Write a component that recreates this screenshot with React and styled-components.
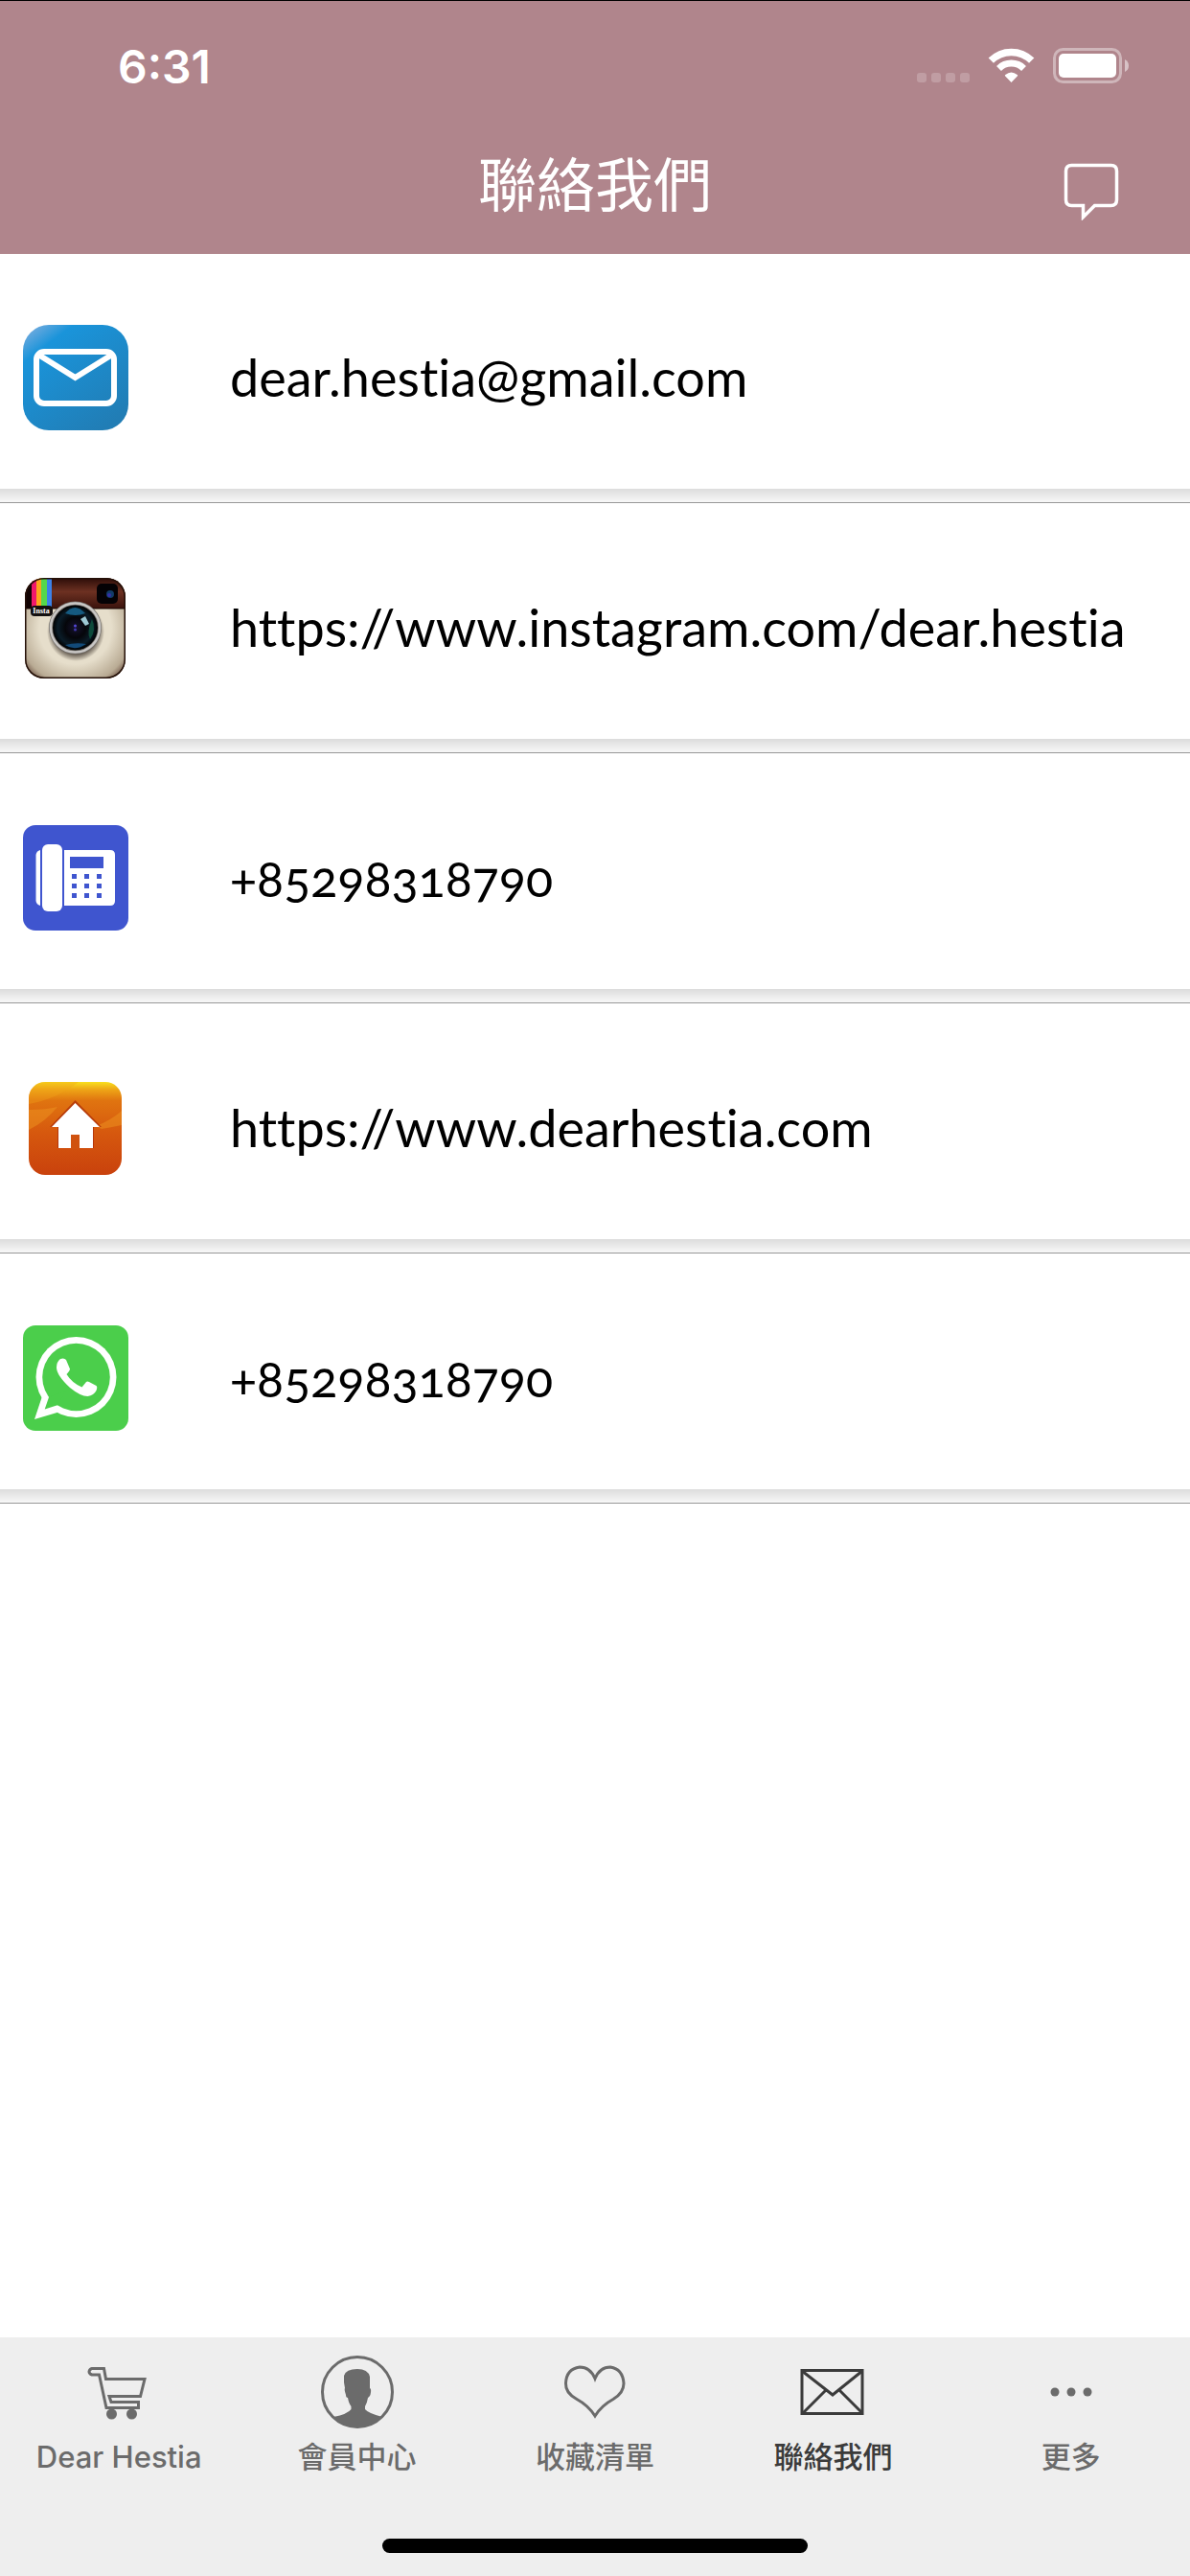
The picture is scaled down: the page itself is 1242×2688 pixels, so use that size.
import styled, { createGlobalStyle } from "styled-components";

const CONTACTS = [
  { icon: MailIcon, text: "dear.hestia@gmail.com", href: "mailto:dear.hestia@gmail.com" },
  { icon: InstaIcon, text: "https://www.instagram.com/dear.hestia", href: "https://www.instagram.com/dear.hestia" },
  { icon: PhoneIcon, text: "+85298318790", href: "tel:+85298318790", number: true },
  { icon: HomeIcon, text: "https://www.dearhestia.com", href: "https://www.dearhestia.com" },
  { icon: WhatsappIcon, text: "+85298318790", href: "https://wa.me/85298318790", number: true },
];

const TABS = [
  { icon: CartIcon, label: "Dear Hestia" },
  { icon: MemberIcon, label: "會員中心" },
  { icon: HeartIcon, label: "收藏清單" },
  { icon: EnvelopeIcon, label: "聯絡我們", active: true },
  { icon: MoreIcon, label: "更多" },
];

export default function App() {
  return (
    <Screen>
      <GlobalStyle />
      <Header>
        <StatusBar>
          <Time>6:31</Time>
          <StatusIcons />
        </StatusBar>
        <NavBar>
          <Title>聯絡我們</Title>
          <ChatButton type="button" aria-label="訊息">
            <ChatIcon />
          </ChatButton>
        </NavBar>
      </Header>
      <List>
        {CONTACTS.map(({ icon: Icon, text, href, number }) => (
          <Item key={href}>
            <ContactLink href={href}>
              <Icon />
              <ContactText $number={number}>{text}</ContactText>
            </ContactLink>
          </Item>
        ))}
      </List>
      <Footer>
        <Tabs>
          {TABS.map(({ icon: Icon, label, active }) => (
            <Tab key={label} type="button" $active={active}>
              <Icon />
              <span>{label}</span>
            </Tab>
          ))}
        </Tabs>
        <HomeIndicator />
      </Footer>
    </Screen>
  );
}

function StatusIcons() {
  return (
    <svg width="222" height="40" viewBox="0 0 222 40" fill="#fff" aria-hidden="true">
      <g opacity="0.2">
        <rect x="1" y="27" width="10" height="10" rx="3" />
        <rect x="16" y="27" width="10" height="10" rx="3" />
        <rect x="31" y="27" width="10" height="10" rx="3" />
        <rect x="46" y="27" width="10" height="10" rx="3" />
      </g>
      <g fill="none" stroke="#fff">
        <path d="M78.300 14.200A30 30 0 0 1 120.700 14.200" strokeWidth="7.500" />
        <path d="M86.500 22.400A18.500 18.500 0 0 1 112.500 22.400" strokeWidth="7" />
      </g>
      <path d="M99.500 37L93 30.300Q92.500 29.500 93.300 29Q99.500 24 105.700 29Q106.500 29.500 106 30.300Z" />
      <rect x="144.500" y="2.500" width="69" height="34" rx="9" fill="none" stroke="#fff" strokeWidth="3" opacity="0.400" />
      <rect x="149" y="7" width="60" height="25" rx="5" />
      <path d="M218 13Q222 15 222 19.500Q222 24 218 26Z" opacity="0.500" />
    </svg>
  );
}

function ChatIcon() {
  return (
    <svg width="58" height="60" viewBox="0 0 58 60" fill="none" stroke="#fff" strokeWidth="3.500" aria-hidden="true">
      <path d="M8.500 2.500H49.500Q55.500 2.500 55.500 8.500V38.500Q55.500 44.500 49.500 44.500H32.500L20.500 56.500V44.500H8.500Q2.500 44.500 2.500 38.500V8.500Q2.500 2.500 8.500 2.500Z" />
    </svg>
  );
}

function MailIcon() {
  return (
    <AppIcon viewBox="0 0 110 110" aria-hidden="true">
      <defs>
        <linearGradient id="mail" x1="0" y1="0" x2="0.750" y2="1">
          <stop offset="0" stopColor="#7fb0e0" />
          <stop offset="0.060" stopColor="#6faade" />
          <stop offset="0.230" stopColor="#1a94da" />
          <stop offset="1" stopColor="#217db5" />
        </linearGradient>
      </defs>
      <rect width="110" height="110" rx="27" fill="url(#mail)" />
      <g fill="none" stroke="#fff" strokeWidth="6">
        <rect x="14" y="28" width="81" height="54" rx="8" />
        <path d="M16 31L54.500 55L93 31" />
      </g>
    </AppIcon>
  );
}

function InstaIcon() {
  return (
    <AppIcon viewBox="0 0 110 110" aria-hidden="true">
      <defs>
        <radialGradient id="body" cx="0.500" cy="0.500" r="0.720">
          <stop offset="0.500" stopColor="#e6decb" />
          <stop offset="0.780" stopColor="#b9ab94" />
          <stop offset="0.950" stopColor="#4a2a20" />
        </radialGradient>
        <linearGradient id="leather" x1="0" y1="0" x2="0" y2="1">
          <stop offset="0" stopColor="#2c0c08" />
          <stop offset="0.450" stopColor="#6d3122" />
          <stop offset="1" stopColor="#3a120c" />
        </linearGradient>
        <radialGradient id="lens" cx="0.500" cy="0.500" r="0.500">
          <stop offset="0" stopColor="#15122e" />
          <stop offset="0.450" stopColor="#05060a" />
          <stop offset="0.780" stopColor="#0a1c28" />
          <stop offset="1" stopColor="#000" />
        </radialGradient>
        <radialGradient id="shade">
          <stop offset="0.700" stopColor="#1c120c" stopOpacity="0.800" />
          <stop offset="1" stopColor="#1c120c" stopOpacity="0" />
        </radialGradient>
        <clipPath id="case">
          <rect x="2" y="3" width="105" height="105" rx="20" />
        </clipPath>
      </defs>
      <g clipPath="url(#case)">
        <rect x="2" y="3" width="105" height="105" fill="url(#body)" />
        <rect x="2" y="3" width="105" height="32" fill="url(#leather)" />
        <rect x="2" y="3" width="7" height="32" fill="#120303" />
        <rect x="9" y="3" width="5" height="30" fill="#f0186c" />
        <rect x="14" y="3" width="5" height="30" fill="#fba51c" />
        <rect x="19" y="3" width="6" height="30" fill="#55d84c" />
        <rect x="25" y="3" width="5" height="30" fill="#3c82e8" />
        <rect x="77" y="9" width="22" height="21" rx="5" fill="#050205" />
        <circle cx="91" cy="20" r="4" fill="#123c68" />
        <circle cx="90" cy="21" r="2" fill="#3530a8" />
        <path d="M2 35H107" stroke="#1b0805" strokeWidth="1" />
        <rect x="2" y="3" width="105" height="105" rx="20" fill="none" stroke="#241008" strokeWidth="3" />
      </g>
      <rect x="8" y="32" width="23" height="11" rx="4" fill="#141010" />
      <text x="19" y="40" fill="#fff" fontSize="8" fontWeight="700" textAnchor="middle" fontFamily="Liberation Serif, serif">Insta</text>
      <ellipse cx="55" cy="59" rx="30" ry="31" fill="url(#shade)" />
      <circle cx="54.500" cy="55" r="27.500" fill="#77736f" />
      <circle cx="54.500" cy="55" r="25.500" fill="none" stroke="#c9c7c5" strokeWidth="2.500" />
      <circle cx="54.500" cy="55" r="23.500" fill="url(#lens)" />
      <path d="M44 40Q54 28 65 40Q55 44 44 40Z" fill="#155a80" />
      <path d="M44 73Q54 80 66 72Q55 70 44 73Z" fill="#124a78" />
      <path d="M72 46Q77 57 70 67Q66 60 72 46Z" fill="#0d4a3b" />
      <path d="M60 46L65 43L69 51L65 53Z" fill="#9dc8d4" />
      <circle cx="54.500" cy="53" r="1.500" fill="#5548d8" />
      <circle cx="54.500" cy="57" r="1.500" fill="#4238b0" />
    </AppIcon>
  );
}

function PhoneIcon() {
  return (
    <AppIcon viewBox="0 0 110 110" aria-hidden="true">
      <rect width="110" height="110" rx="13" fill="#3f55cf" />
      <g fill="#fff">
        <path d="M18 26V84Q14 83 13.500 79V31Q14 27 18 26Z" />
        <rect x="20" y="20" width="21" height="70" rx="6" />
        <path d="M43 26H91Q96 26 96 31V79Q96 84 91 84H43Z" />
      </g>
      <g fill="#3f55cf">
        <rect x="49" y="33" width="35" height="12" />
        {[51, 64, 77].map((x) =>
          [51, 61, 71].map((y) => <rect key={x + "-" + y} x={x} y={y} width="5" height="5" />)
        )}
      </g>
    </AppIcon>
  );
}

function HomeIcon() {
  return (
    <AppIcon viewBox="0 0 110 110" aria-hidden="true">
      <defs>
        <linearGradient id="home" x1="0" y1="0" x2="0" y2="1">
          <stop offset="0" stopColor="#f8e01e" />
          <stop offset="0.080" stopColor="#eea616" />
          <stop offset="0.200" stopColor="#e07410" />
          <stop offset="0.550" stopColor="#d6580e" />
          <stop offset="1" stopColor="#c9420d" />
        </linearGradient>
        <clipPath id="tile">
          <rect x="6" y="7" width="97" height="97" rx="17" />
        </clipPath>
      </defs>
      <g clipPath="url(#tile)">
        <rect x="6" y="7" width="97" height="97" fill="url(#home)" />
        <path d="M6 30Q35 25 58 7H6Z" fill="#f0a21a" opacity="0.350" />
        <path d="M6 36Q24 36 36 33Q24 48 6 57Z" fill="#ee9420" opacity="0.500" />
        <path d="M103 37Q92 47 76 53L82 56Q94 54 103 52Z" fill="#ee9420" opacity="0.500" />
      </g>
      <path d="M54.500 26L28 54H36V76H74V54H82Z" fill="#a82a08" opacity="0.700" />
      <path d="M54.500 29L30 54H37V76H50V62H59V76H73V54H80Z" fill="#fff" />
      <rect x="50" y="62" width="9" height="15" fill="#d0520f" />
    </AppIcon>
  );
}

function WhatsappIcon() {
  return (
    <AppIcon viewBox="0 0 110 110" aria-hidden="true">
      <rect width="110" height="110" rx="13" fill="#4bce4b" />
      <g fill="#fff">
        <circle cx="55.500" cy="54" r="42" />
        <path d="M20 74L12 98L35.500 91L50 70Z" />
      </g>
      <g fill="#4bce4b">
        <circle cx="55.500" cy="54" r="35.300" />
        <path d="M27 75L22.700 87.500L36 83.300L45 68Z" />
      </g>
      <path
        d="M39 35Q43 33.500 45 36L49 45.500Q49 47 45.500 51Q51 60 61.500 64.500L66 59Q67 58 69 59L76.500 63Q78 64 76.500 68Q74 73 67.500 74Q60 74 49 65Q35 52 35 44Q35 38 39 35Z"
        fill="#fff"
      />
    </AppIcon>
  );
}

function CartIcon() {
  return (
    <TabIcon viewBox="0 0 90 90" aria-hidden="true">
      <path
        d="M17 21.500H29.500L31.500 32.500H72L67.500 50.500H35L37 56.500H65.500V62.500H32L24.500 28H17Q14 27 14 24.700Q14.500 22 17 21.500Z"
        fill="none"
        stroke="currentColor"
        strokeWidth="3"
      />
      <circle cx="37.500" cy="69" r="5.500" fill="currentColor" />
      <circle cx="58.500" cy="69" r="5.500" fill="currentColor" />
    </TabIcon>
  );
}

function MemberIcon() {
  return (
    <TabIcon viewBox="0 0 90 90" aria-hidden="true">
      <circle cx="45" cy="46" r="36.500" fill="none" stroke="currentColor" strokeWidth="3" />
      <path
        d="M45 22Q56 22 58 30V42Q60 43 58.500 49Q57 52 56 52Q55 58 53 61V64Q56 68 71 72Q60 83 45 83Q30 83 20 72Q35 69 38.500 64V61Q36 58 35 52Q33 52 33 49Q31 43 32 42L31 36V29Q33 22 45 22Z"
        fill="currentColor"
      />
    </TabIcon>
  );
}

function HeartIcon() {
  return (
    <TabIcon viewBox="0 0 90 90" aria-hidden="true">
      <path
        d="M45 32Q40 20 29 20Q15 22 14.500 37Q14 47 26 53.500Q38 60 45 71Q52 60 64 53.500Q75 47 75 37Q74 22 61 20Q50 20 45 32Z"
        fill="none"
        stroke="currentColor"
        strokeWidth="3"
      />
    </TabIcon>
  );
}

function EnvelopeIcon() {
  return (
    <TabIcon viewBox="0 0 90 90" fill="none" stroke="currentColor" strokeWidth="3" aria-hidden="true">
      <rect x="13" y="23.500" width="63" height="45" />
      <path d="M13 24L45 49L76 24M14 68L38 44M76 68L52 44" />
    </TabIcon>
  );
}

function MoreIcon() {
  return (
    <TabIcon viewBox="0 0 90 90" fill="currentColor" aria-hidden="true">
      <circle cx="28" cy="46" r="4.500" />
      <circle cx="45" cy="46" r="4.500" />
      <circle cx="62" cy="46" r="4.500" />
    </TabIcon>
  );
}

const GlobalStyle = createGlobalStyle`
  * {
    box-sizing: border-box;
  }
  body {
    margin: 0;
    background: #fff;
    font-family: Inter, "Noto Sans CJK TC", sans-serif;
  }
`;

const Screen = styled.div`
  display: flex;
  flex-direction: column;
  min-height: 100vh;
`;

const Header = styled.header`
  background: #b0858c;
  border-top: 1px solid #000;
  box-shadow: 0 1px 0 #b0858c;
  color: #fff;
`;

const StatusBar = styled.div`
  display: flex;
  justify-content: space-between;
  align-items: center;
  height: 131px;
  padding: 5px 64px 0 123px;
`;

const Time = styled.span`
  font-size: 48px;
  font-weight: 600;
`;

const NavBar = styled.div`
  display: grid;
  grid-template-columns: 1fr auto 1fr;
  align-items: center;
  height: 132px;
  padding: 0 74px 8px;
`;

const Title = styled.h1`
  grid-column: 2;
  margin: 0;
  font-size: 61px;
  font-weight: 400;
  line-height: 124px;
`;

const ChatButton = styled.button`
  justify-self: end;
  display: flex;
  padding: 12px 0 0;
  border: none;
  background: none;
`;

const List = styled.ul`
  flex: 1;
  margin: 0;
  padding: 0;
  list-style: none;
`;

const Item = styled.li`
  border-bottom: 1px solid #979797;
  background: linear-gradient(#dcdcdc, #f8f8f8) bottom / 100% 14px no-repeat;
`;

const ContactLink = styled.a`
  display: flex;
  align-items: center;
  gap: 106px;
  height: 260px;
  padding: 0 24px;
  color: #000;
  text-decoration: none;
`;

const AppIcon = styled.svg`
  flex: none;
  width: 110px;
  height: 110px;
`;

const ContactText = styled.span`
  font-family: Lato, sans-serif;
  font-size: ${(props) => (props.$number ? "52px" : "54px")};
  font-variant-ligatures: none;
  font-variant-numeric: oldstyle-nums;
  line-height: 64px;
  white-space: nowrap;
`;

const Footer = styled.footer`
  display: flex;
  flex-direction: column;
  align-items: center;
  gap: 62px;
  padding: 11px 0 24px;
  background: #eee;
`;

const Tabs = styled.nav`
  display: flex;
  width: 100%;
`;

const Tab = styled.button`
  flex: 1 1 0;
  display: flex;
  flex-direction: column;
  align-items: center;
  padding: 0;
  border: none;
  background: none;
  color: ${(props) => (props.$active ? "#3b3b3b" : "#6b6b6b")};
  font-family: inherit;
  font-size: 31px;
  font-weight: 500;
  line-height: 47px;
`;

const TabIcon = styled.svg`
  width: 90px;
  height: 90px;
`;

const HomeIndicator = styled.div`
  width: 444px;
  height: 15px;
  border-radius: 8px;
  background: #000;
`;
